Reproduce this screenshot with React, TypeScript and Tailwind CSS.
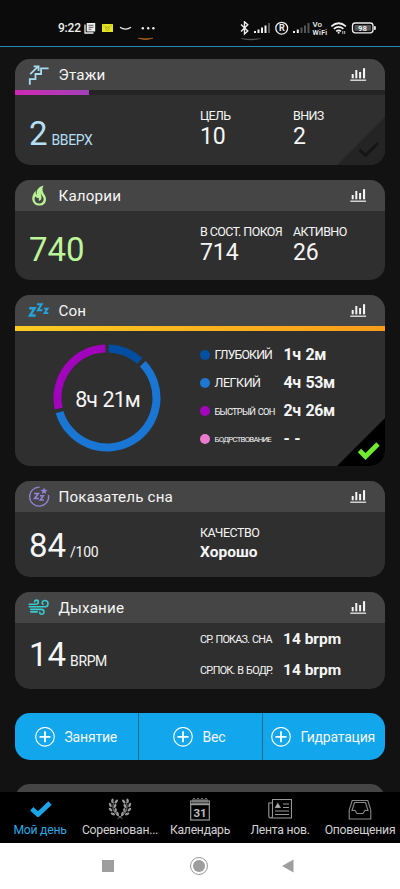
import type { ReactNode } from 'react';

function ChartIcon() {
  return (
    <svg width="18" height="15" viewBox="0 0 18 15" className="shrink-0" fill="#f4f4f4">
      <rect x="1.7" y="7" width="2" height="4.3" />
      <rect x="5.3" y="3" width="2" height="8.3" />
      <rect x="9.1" y="5" width="2" height="6.3" />
      <rect x="13" y="1.2" width="2.1" height="10.1" />
      <rect x="0.3" y="12.6" width="15.8" height="1.2" />
    </svg>
  );
}

function StairsIcon() {
  return (
    <svg width="22" height="22" viewBox="0 0 22 22" fill="none" stroke="#a9dcf3" strokeWidth="1.8">
      <path d="M1.800 20.800v-5.600h5.700V10h5.600V4.300h7.500" />
      <path d="M2.200 10.200 10 2.700M5.600 2.300h5v4.700" />
    </svg>
  );
}

function FlameIcon() {
  return (
    <svg width="22" height="22" viewBox="0 0 22 22" fill="#b9f294" fillRule="evenodd">
      <path d="M15.500.6C9.700 2.300 7.800 5.900 9 9.900 7.900 9 7.500 7.600 7.700 5.500 5 8.700 4 12 4.300 14.500c.5 3.700 3.400 6.100 7.100 6.100 3.800 0 6.600-2.700 6.600-6.200 0-2.100-.7-3.600-1.800-5.100C14.300 6.500 13.700 4 15.500.6ZM12.300 7.500c.4 1.400 1.300 2.300 2.100 3.500.8 1.100 1.200 2.100 1.200 3.400 0 2.300-1.800 4-4.200 4-2.600 0-4.600-1.600-4.800-4-.1-1 .1-2 .6-3.200.9 1.200 2.200 1.800 4 2.100-.5.800-.6 1.700-.3 2.600 2.200-.7 3-2.300 2.500-4.700-.2-1.100-.7-2.200-1.100-3.700Z" />
    </svg>
  );
}

function SleepIcon() {
  return (
    <svg width="22" height="22" viewBox="0 0 22 22" fill="none" stroke="#23a4dc">
      <path d="M1.200 8.300h5.300L2 15.500h5.700" strokeWidth="2.400" />
      <path d="M9 4.300h4.600L9.900 10.200h4.500" strokeWidth="2" />
      <path d="M16 8.600h3.600l-3 4.500h3.700" strokeWidth="1.800" />
    </svg>
  );
}

function SleepScoreIcon() {
  return (
    <svg width="22" height="22" viewBox="0 0 22 22" fill="none" stroke="#9482d6" strokeWidth="1.300">
      <path d="M11.600 1.200A9.500 9.500 0 1 0 20.500 9" />
      <path d="M6 7.500h4.300L6.700 12.500h4.300" strokeWidth="1.700" />
      <path d="M12 9.800h3.300l-2.900 4.200h3.500" strokeWidth="1.600" />
      <path fill="#9482d6" stroke="none" d="m16 1.400 1 2.300 2.600.2-2 1.700.6 2.500-2.200-1.300-2.200 1.300.6-2.500-2-1.700 2.600-.2Z" />
    </svg>
  );
}

function WindIcon() {
  return (
    <svg width="22" height="22" viewBox="0 0 22 22" fill="none" stroke="#38ccd0" strokeWidth="1.600" strokeLinecap="round">
      <path d="M1.200 7.300h6.600c3.300 0 3.200-4 .7-4.200-1.200 0-1.900.8-1.800 1.700" />
      <path d="M1.200 9.800h15.400c4.500 0 4.500-6.300.3-6.300-2.600 0-3.600 2.700-1.900 3.900" />
      <path d="M2.800 12.400h10.500c3.600 0 3.300 4.900.4 4.900-1.300 0-2-.7-1.900-1.900" />
      <path d="M2.800 14.900h6.400" />
    </svg>
  );
}

function Card({
  icon,
  title,
  className,
  bar,
  children,
}: {
  icon: ReactNode;
  title: string;
  className: string;
  bar?: ReactNode;
  children: ReactNode;
}) {
  return (
    <section className={`relative flex shrink-0 flex-col overflow-hidden rounded-[15px] bg-[#2f2f2f] ${className}`}>
      <header className="flex h-[31px] shrink-0 items-center bg-[#454545] pl-[13px] pr-[17px]">
        {icon}
        <h2 className="ml-[8.500px] mt-px flex-1 text-[15.200px] leading-5 tracking-[0.15px]">{title}</h2>
        <ChartIcon />
      </header>
      {bar}
      {children}
    </section>
  );
}

function Stat({ label, value, className }: { label: string; value: string; className: string }) {
  return (
    <div className={className}>
      <div className="whitespace-nowrap text-[12.500px] leading-4 tracking-[-0.600px]">{label}</div>
      <div className="text-[23px] leading-[26px] tracking-[-0.100px]">{value}</div>
    </div>
  );
}

function arc(from: number, to: number) {
  const p = (a: number) => {
    const t = (a * Math.PI) / 180;
    return `${(54 + 49.5 * Math.sin(t)).toFixed(2)} ${(54 - 49.5 * Math.cos(t)).toFixed(2)}`;
  };
  return `M${p(from)}A49.5 49.5 0 ${to - from > 180 ? 1 : 0} 1 ${p(to)}`;
}

const stages = [
  { name: 'ГЛУБОКИЙ', time: '1ч 2м', dot: 'bg-[#0550a4]', size: 'text-[12.300px] tracking-[-0.850px]' },
  { name: 'ЛЕГКИЙ', time: '4ч 53м', dot: 'bg-[#1d77d3]', size: 'text-[12.500px] tracking-[-0.450px]' },
  { name: 'БЫСТРЫЙ СОН', time: '2ч 26м', dot: 'bg-[#a306bb]', size: 'text-[9.300px] tracking-[-0.750px] [word-spacing:1px]' },
  { name: 'БОДРСТВОВАНИЕ', time: '- -', dot: 'bg-[#ec7bd0]', size: 'text-[7.800px] tracking-[-0.750px]' },
];

function Corner({ done }: { done: boolean }) {
  return (
    <svg width="48" height="48" viewBox="0 0 48 48" className="absolute bottom-0 right-0">
      <path d="M48 0V48H0Z" fill={done ? '#000' : '#242424'} />
      <path d="m22.500 32.500 6 6 12.500-12.500" fill="none" stroke={done ? '#70ea2c' : '#151515'} strokeWidth={done ? 4.8 : 3} />
    </svg>
  );
}

function StatusBar() {
  return (
    <div className="flex h-[46px] shrink-0 items-start bg-[#0b0b0b] pl-[58px] pt-[21px] text-[#eee]">
      <span className="w-[26px] whitespace-nowrap text-[12px] font-medium leading-[15px] tracking-[-0.200px]">9:22</span>
      <svg width="74" height="24" viewBox="84 21 74 24" fill="none" stroke="#eee">
        <path d="M85 24.500v8.500h8.500" strokeWidth="1.300" />
        <rect x="86.700" y="23" width="8.500" height="8.500" fill="#eee" stroke="none" />
        <path d="M88.500 25.300h5M88.500 27.300h5M88.500 29.300h3" stroke="#333" strokeWidth=".8" />
        <rect x="102" y="24" width="11" height="8" fill="#e3e31f" stroke="none" />
        <path d="m102.500 24.500 5 4 5-4" stroke="#a5a517" strokeWidth=".6" />
        <circle cx="107.500" cy="28.500" r="1.800" stroke="#aaa73a" strokeWidth=".8" />
        <path d="M120 27.200q5.500 3.800 11 0" strokeWidth="1.300" />
        <g fill="#eee" stroke="none">
          <circle cx="142.800" cy="28.200" r="1.200" />
          <circle cx="148.200" cy="28.200" r="1.200" />
          <circle cx="153.400" cy="28.200" r="1.200" />
        </g>
        <path d="M138 38.200q7.500 2.800 15 0-7.500 1-15 0Z" fill="#d97b24" stroke="#d97b24" strokeWidth=".4" />
      </svg>
      <svg width="140" height="24" viewBox="239 21 140 24" className="ml-[81px]" fill="none" stroke="#eee">
        <path d="m241 24.500 6.800 6.500-3.300 3V21.800l3.300 3L241 31.500" strokeWidth="1.400" />
        <path d="M241 38.600q9.500 3 20 0-10 1-20 0Z" fill="#555" stroke="#555" strokeWidth=".4" />
        <g fill="#eee" stroke="none">
          <rect x="254" y="31" width="2" height="2" />
          <rect x="257.500" y="29.500" width="2" height="3.500" />
          <rect x="261" y="27.500" width="2" height="5.500" />
          <rect x="264.500" y="25.500" width="2" height="7.500" />
          <rect x="268" y="23" width="2" height="10" fill="#555" />
          <rect x="293" y="31" width="2" height="2" />
          <rect x="296.800" y="29.500" width="2" height="3.500" />
          <rect x="300.500" y="27.500" width="2" height="5.500" fill="#555" />
          <rect x="304" y="25.500" width="2" height="7.500" fill="#555" />
          <rect x="307.500" y="23" width="2" height="10" fill="#555" />
          <text x="278.900" y="31.400" fontSize="9" fontWeight="700">R</text>
          <text x="312.600" y="27.200" fontSize="8" fontWeight="500">Vo</text>
          <text x="312.600" y="34.500" fontSize="7" fontWeight="600" textLength="14.500">WiFi</text>
        </g>
        <circle cx="281.700" cy="28.200" r="5.900" strokeWidth="1.300" />
        <path d="M331.300 26.300q7.300-6.100 14.600 0M333.800 28.900q4.800-3.900 9.600 0M336.200 31.300q2.400-1.900 4.800 0" strokeWidth="1.700" />
        <circle cx="338.600" cy="32.800" r="1" fill="#eee" stroke="none" />
        <path d="M342.800 34v-3M344.700 31v3" strokeWidth=".8" />
        <rect x="352.500" y="23" width="20.500" height="9.800" rx="2.800" strokeWidth="1.300" />
        <rect x="354.500" y="25" width="16.500" height="5.800" rx="1" fill="#555" stroke="none" />
        <rect x="374" y="26" width="1.800" height="4" rx=".8" fill="#eee" stroke="none" />
        <text x="358" y="30.700" fontSize="7.800" fontWeight="700" fill="#eee" stroke="none">98</text>
      </svg>
    </div>
  );
}

function PlusIcon() {
  return (
    <svg width="20" height="20" viewBox="0 0 20 20" fill="none" stroke="#fff">
      <circle cx="10" cy="9.800" r="9.300" strokeWidth="1.100" />
      <path d="M10 4.300v11M4.500 9.800h11" strokeWidth="1.800" />
    </svg>
  );
}

function LaurelIcon() {
  const leaves = [
    [4.4, 3.8, 10], [2.3, 8, -22], [2.6, 12.6, -45], [4.8, 16.9, -70],
    [8.2, 4.6, 40], [7, 9, 25], [7.6, 13.2, 5], [9.6, 17, -18],
  ];
  const half = leaves.map(([x, y, r]) => (
    <ellipse key={`${x}-${y}`} cx={x} cy={y} rx="1.25" ry="2.3" transform={`rotate(${r} ${x} ${y})`} />
  ));
  return (
    <svg width="24" height="24" viewBox="0 0 24 24" fill="#999">
      <g>{half}</g>
      <g transform="matrix(-1 0 0 1 24 0)">{half}</g>
      <path d="M5.500 5Q3 15 10.500 18.800l4 3M18.500 5Q21 15 13.500 18.800l-4 3" fill="none" stroke="#999" strokeWidth=".8" />
    </svg>
  );
}

const tabs = [
  {
    label: 'Мой день',
    icon: (
      <svg width="24" height="24" viewBox="0 0 24 24" fill="none" stroke="#1ba5e9" strokeWidth="4.800">
        <path d="m3.800 11.800 6.200 5.800L22 6" strokeLinejoin="round" />
      </svg>
    ),
  },
  { label: 'Соревнован...', icon: <LaurelIcon /> },
  {
    label: 'Календарь',
    icon: (
      <svg width="24" height="24" viewBox="0 0 24 24" fill="none" stroke="#999">
        <rect x="2.700" y="4" width="18.600" height="19" strokeWidth="1.200" />
        <path d="M2.700 7.300h18.600" strokeWidth="1.800" />
        <path d="M5 7V2.200q1-2 2 0V7M9 7V2.200q1-2 2 0V7M13 7V2.200q1-2 2 0V7M17 7V2.200q1-2 2 0V7" strokeWidth="1" />
        <text x="5.600" y="19.600" fontSize="11.500" fontWeight="700" fill="#bbb" stroke="none">31</text>
      </svg>
    ),
  },
  {
    label: 'Лента нов.',
    icon: (
      <svg width="24" height="24" viewBox="0 0 24 24" fill="none" stroke="#999" strokeWidth="1.100">
        <path d="M4.500 2.500h19V21H2.500Q.8 21 .8 19.300V6h3.700V2.500ZM4.500 6v13q0 2-1.800 2" />
        <path d="M15 7h6M15 10.500h6M7 14h14M7 17.500h14" />
        <path d="M7.500 10.500 9.800 6.500l2.300 4Z" fill="#bbb" />
      </svg>
    ),
  },
  {
    label: 'Оповещения',
    icon: (
      <svg width="24" height="24" viewBox="0 0 24 24" fill="none" stroke="#888" strokeWidth="1.100">
        <path d="M4.200 3.500h15.600L22.800 13v9H1.200v-9Z" />
        <path d="m4 13.500 3-.2 2 3.200h6l2-3.200 3 .2-2.500-8h-11Z" />
      </svg>
    ),
  },
];

export default function App() {
  return (
    <div className="flex h-[889px] w-[400px] flex-col overflow-hidden bg-[#121212] font-['Roboto','Noto_Sans',sans-serif] text-[#f5f5f5]">
      <StatusBar />
      <div className="h-px shrink-0 bg-[#2787b5]" />

      <main className="flex h-[745px] shrink-0 flex-col overflow-hidden px-[15px] pt-3">
        <Card
          icon={<StairsIcon />}
          title="Этажи"
          className="h-[106px]"
          bar={
            <div className="h-[5px] shrink-0 bg-[#242424]">
              <div className="h-full w-[74px] bg-linear-to-r from-[#d027b5] to-[#a43fb9]" />
            </div>
          }
        >
          <div className="flex pl-[14px]">
            <div className="w-[171px] pt-[19px] text-[33px] leading-10 text-[#b5dff5]">
              2<span className="ml-[4px] text-[14px] tracking-[-0.400px]">ВВЕРХ</span>
            </div>
            <Stat className="w-[93px] pt-[13px]" label="ЦЕЛЬ" value="10" />
            <Stat className="pt-[13px]" label="ВНИЗ" value="2" />
          </div>
          <Corner done={false} />
        </Card>

        <Card icon={<FlameIcon />} title="Калории" className="mt-[15px] h-[100px]">
          <div className="flex pl-[14px]">
            <div className="w-[171px] pt-[19px] text-[33px] leading-10 text-[#bdf59a]">740</div>
            <Stat className="w-[93px] pt-[13px]" label="В СОСТ. ПОКОЯ" value="714" />
            <Stat className="pt-[13px]" label="АКТИВНО" value="26" />
          </div>
        </Card>

        <Card
          icon={<SleepIcon />}
          title="Сон"
          className="mt-[15px] h-[171px]"
          bar={<div className="h-[5px] shrink-0 bg-linear-to-r from-[#f9cc22] to-[#fa9c1a]" />}
        >
          <div className="flex">
            <div className="ml-[38px] mt-[13px] grid size-[108px] place-items-center">
              <svg width="108" height="108" viewBox="0 0 108 108" fill="none" strokeWidth="8" className="col-start-1 row-start-1">
                <path d={arc(1.9, 41.5)} stroke="#024ea2" />
                <path d={arc(46.2, 253.5)} stroke="#1a76d5" />
                <path d={arc(257.7, 358.1)} stroke="#a203bd" />
              </svg>
              <span className="col-start-1 row-start-1 mt-[3px] whitespace-nowrap pl-px text-[21.500px] leading-6 tracking-[-0.950px] [word-spacing:1px]">8ч 21м</span>
            </div>
            <div className="ml-[39px] mt-[10px]">
              {stages.map((s) => (
                <div key={s.name} className="flex h-[28px] items-center">
                  <span className={`size-[10px] rounded-full ${s.dot}`} />
                  <span className={`ml-[4.500px] mt-px w-[69px] whitespace-nowrap ${s.size}`}>{s.name}</span>
                  <span className="text-[16px] font-bold leading-5 tracking-[-0.500px] [word-spacing:1.500px]">{s.time}</span>
                </div>
              ))}
            </div>
          </div>
          <Corner done />
        </Card>

        <Card icon={<SleepScoreIcon />} title="Показатель сна" className="mt-[15px] h-[96px]">
          <div className="flex pl-[14px]">
            <div className="w-[171px] pt-[14px] text-[33px] leading-10">
              84<span className="ml-[4px] text-[14px] tracking-[-0.300px]">/100</span>
            </div>
            <div className="pt-[13px]">
              <div className="text-[12.500px] leading-4 tracking-[-0.500px]">КАЧЕСТВО</div>
              <div className="mt-px text-[15.500px] font-bold leading-5">Хорошо</div>
            </div>
          </div>
        </Card>

        <Card icon={<WindIcon />} title="Дыхание" className="mt-[15px] h-[97px]">
          <div className="flex pl-[14px]">
            <div className="w-[171px] pt-[12px] text-[33px] leading-10">
              14<span className="ml-[4px] text-[14px] tracking-[-0.400px]">BRPM</span>
            </div>
            <div className="pt-[1px]">
              {['СР. ПОКАЗ. СНА', 'СР.ПОК. В БОДР.'].map((label) => (
                <div key={label} className="flex h-[31px] items-center">
                  <span className="w-[83px] whitespace-nowrap pt-px text-[10.800px] tracking-[-0.750px] [word-spacing:0.800px]">{label}</span>
                  <span className="text-[15.500px] font-bold">14 brpm</span>
                </div>
              ))}
            </div>
          </div>
        </Card>

        <div className="mt-[24px] flex h-[47px] shrink-0 overflow-hidden rounded-[15px] bg-[#12a7ed] text-[14px] tracking-[-0.200px]">
          <button className="flex w-[124px] items-center border-r border-[#206b90] pl-5">
            <PlusIcon />
            <span className="ml-[9.500px] mt-[2px]">Занятие</span>
          </button>
          <button className="flex w-[124px] items-center border-r border-[#206b90] pl-[34px]">
            <PlusIcon />
            <span className="ml-[9.500px] mt-[2px]">Вес</span>
          </button>
          <button className="flex flex-1 items-center pl-[8px]">
            <PlusIcon />
            <span className="ml-[9.500px] mt-[2px]">Гидратация</span>
          </button>
        </div>

        <div className="mt-[24px] h-[31px] shrink-0 rounded-t-[15px] bg-[#454545]" />
      </main>

      <nav className="grid h-[51px] shrink-0 grid-cols-5 bg-black text-[12.200px] tracking-[-0.250px] text-[#d0d0d0]">
        {tabs.map((t, i) => (
          <div key={t.label} className={`flex flex-col items-center pt-[5px] ${i === 0 ? 'text-[#2da8e0]' : ''}`}>
            {t.icon}
            <span className="mt-px whitespace-nowrap leading-4">{t.label}</span>
          </div>
        ))}
      </nav>

      <div className="flex h-[46px] items-center bg-white pl-[102px]">
        <div className="size-[12px] bg-[#9e9e9e]" />
        <div className="ml-[76px] size-[18px] rounded-full border border-[#999] p-[2px]">
          <div className="size-full rounded-full bg-[#9e9e9e]" />
        </div>
        <svg width="12" height="14" viewBox="0 0 12 14" className="ml-[74px]">
          <path d="M11.500 .5v13L0 7Z" fill="#9e9e9e" />
        </svg>
      </div>
    </div>
  );
}
